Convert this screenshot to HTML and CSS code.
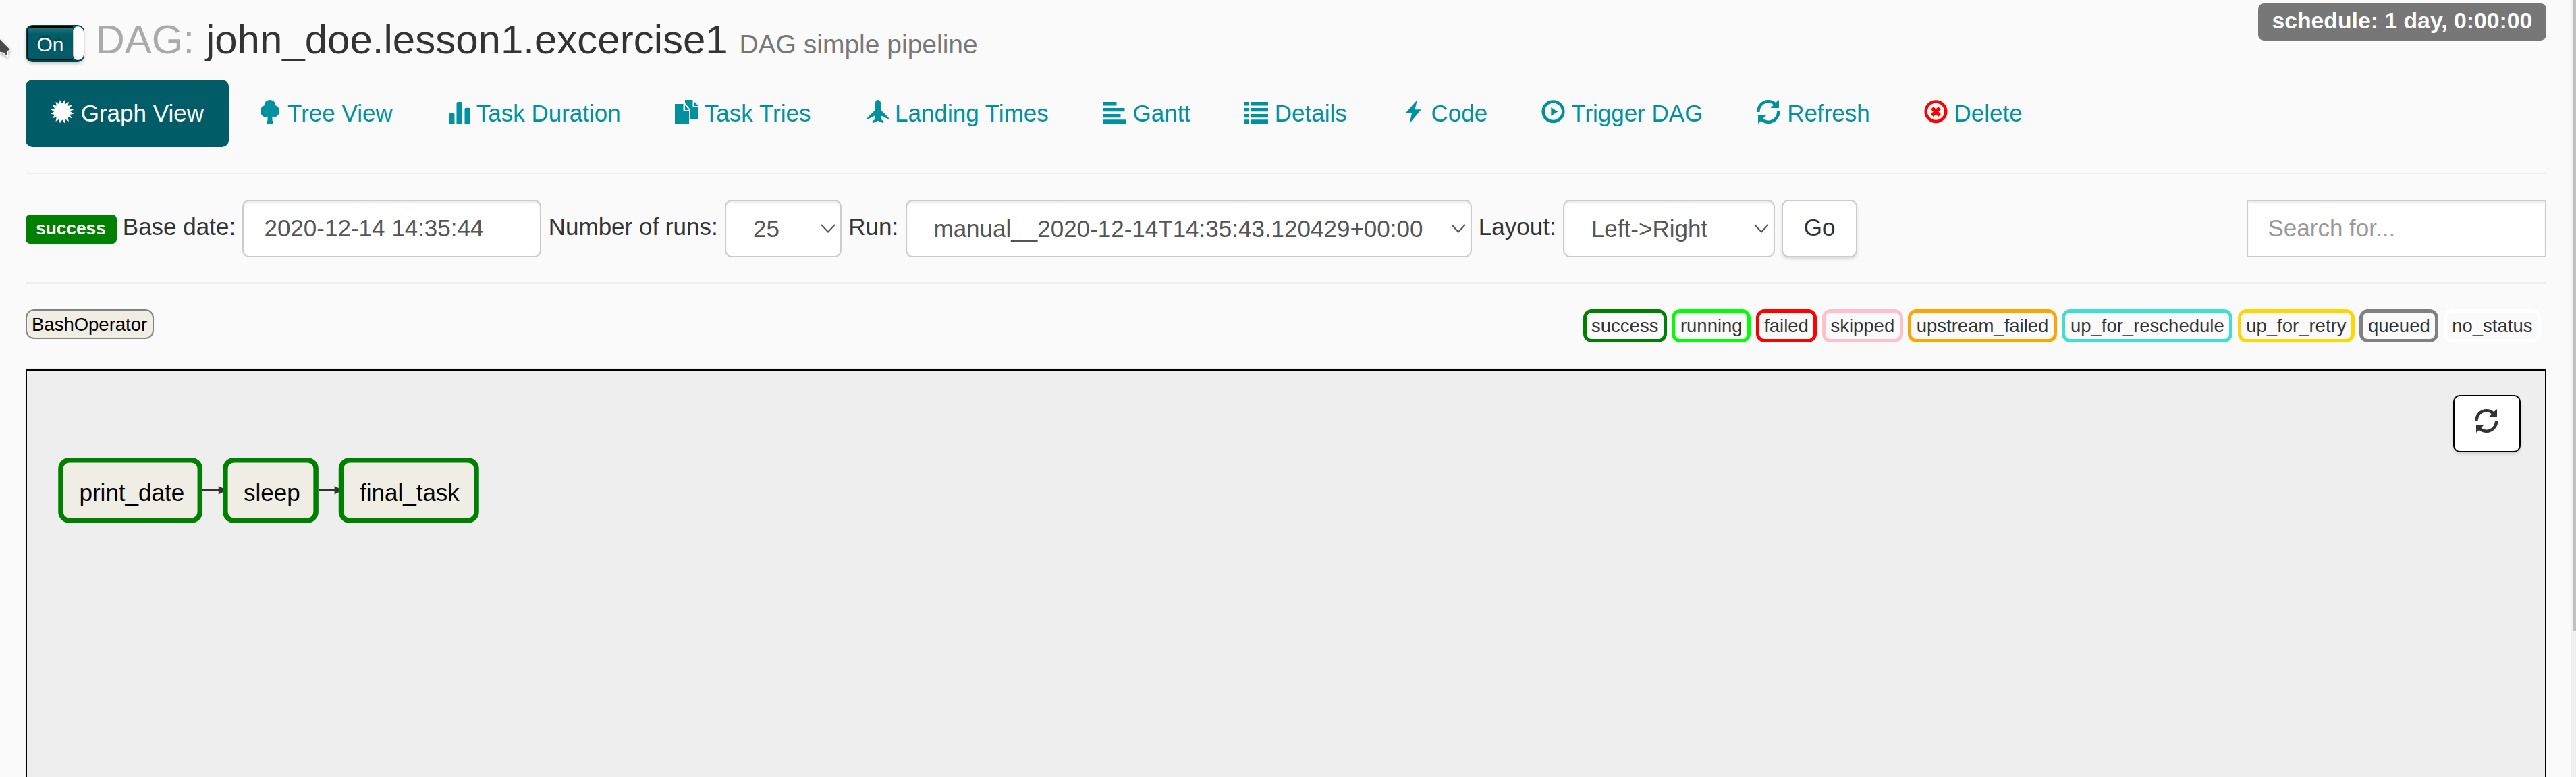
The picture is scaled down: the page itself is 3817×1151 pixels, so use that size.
FILE: index.html
```html
<!DOCTYPE html>
<html lang="en">
<head>
<meta charset="utf-8">
<title>Airflow - john_doe.lesson1.excercise1</title>
<link rel="stylesheet" href="styles.css">
</head>
<body>
<div class="page">
  <header class="head">
    <div class="toggle"><span class="toggle-on">On</span><span class="toggle-handle"></span></div>
    <h3 class="title"><span class="muted">DAG:</span> <span>john_doe.lesson1.excercise1</span> <small>DAG simple pipeline</small></h3>
    <span class="schedule">schedule: 1 day, 0:00:00</span>
  </header>

  <nav class="pills">
    <a class="pill active"><svg class="icon" viewBox="0 0 35 35"><path transform="translate(17.200 17.300)" d="M0-12 3.400-17.200 4.600-11.100 9.700-14.600 8.500-8.500 14.600-9.700 11.100-4.600 17.200-3.400 12 0 17.200 3.400 11.100 4.600 14.600 9.700 8.500 8.500 9.700 14.600 4.600 11.100 3.400 17.200 0 12-3.400 17.200-4.600 11.100-9.700 14.600-8.500 8.500-14.600 9.700-11.100 4.600-17.200 3.400-12 0-17.200-3.400-11.100-4.600-14.600-9.700-8.500-8.500-9.700-14.600-4.600-11.100-3.400-17.200Z"/></svg> Graph View</a>
    <a class="pill"><svg class="icon" viewBox="0 0 35 35"><path d="M18 0c5 0 8.500 4 8.300 8.300C30 9.500 32.200 13 32 17c-.2 5-3.500 8.300-7.500 8.300-1.300 0-2.200-.3-3-.8v6l1.500 1.500v3H13v-3l1.500-1.500v-6c-.8.500-1.800.8-3 .8C7.500 25.300 4.200 22 4 17c-.2-4 2-7.500 5.700-8.700C9.500 4 13 0 18 0Z"/></svg> Tree View</a>
    <a class="pill"><svg class="icon" viewBox="0 0 35 35"><path d="M3 35V22q0-2 2-2h4.500q2 0 2 2v13ZM14.500 35V5q0-2 2-2H21q2 0 2 2v30ZM26.500 35V13.700q0-2 2-2H33q2 0 2 2V35Z"/></svg> Task Duration</a>
    <a class="pill"><svg class="icon" viewBox="0 0 35 35"><path d="M0 6h12.500v11H21v18H0ZM15 8l6 7h-6ZM15 0h11.500v11H35v18H23V14.500L15 4.500ZM29 3l6 6h-6Z"/></svg> Task Tries</a>
    <a class="pill"><svg class="icon" viewBox="0 0 35 35"><path d="M20 0c2.500 0 4 2 4 4.500V15L35 25.500q1.500 1.500 1 3.500l-12-6v5l4.500 4-.5 2.500-5.500-2.500L20 31l-2.500 1-5.500 2.500-.5-2.500 4.500-4v-5L4 29q-.5-2 1-3.500L16 15V4.500C16 2 17.500 0 20 0Z"/></svg> Landing Times</a>
    <a class="pill"><svg class="icon" viewBox="0 0 35 35"><path d="M0 3h20.500v5.500H0ZM0 12h32.500v5.200H0ZM0 21h26.500v5.200H0ZM0 29.300h35V35H0Z"/></svg> Gantt</a>
    <a class="pill"><svg class="icon" viewBox="0 0 35 35"><path d="M0 3h6.300v5.500H0ZM9 3h26v5.500H9ZM0 12h6.300v5.200H0ZM9 12h26v5.200H9ZM0 21h6.300v5.200H0ZM9 21h26v5.200H9ZM0 29.300h6.300V35H0ZM9 29.300h26V35H9Z"/></svg> Details</a>
    <a class="pill"><svg class="icon" viewBox="0 0 35 35"><path d="M24 0 20.500 14.300H30L12.500 35 16 19.800H6.500Z"/></svg> Code</a>
    <a class="pill"><svg class="icon" viewBox="0 0 35 35"><circle class="ring" cx="17.500" cy="17.200" r="14.800"/><path d="M14.300 11l9.900 6.400-9.900 6.400Z"/></svg> Trigger DAG</a>
    <a class="pill"><svg class="icon" viewBox="0 0 35 35"><g id="sync"><path d="M0 18C0 8 7.500 0 17.300 0 21.500 0 25.300 1.500 28.200 4L33 0v12H20.500l4.500-4.500C23 5.800 20.300 4.600 17.300 4.600 10 4.600 4.600 10.500 4.600 18ZM34.600 17c0 10-7.500 18-17.300 18-4.200 0-8-1.500-10.900-4L2 35V23h12l-4.400 4.500c2 1.700 4.700 2.900 7.700 2.900 7.300 0 12.700-5.900 12.700-13.400Z"/></g></svg> Refresh</a>
    <a class="pill"><svg class="icon danger" viewBox="0 0 35 35"><circle class="ring" cx="17.500" cy="17.200" r="14.800"/><path class="cross" d="M12 12l11 11M23 12L12 23"/></svg> Delete</a>
  </nav>

  <hr>

  <div class="filters">
    <span class="state">success</span>
    <span class="lbl">Base date:</span>
    <span class="field date">2020-12-14 14:35:44</span>
    <span class="lbl">Number of runs:</span>
    <span class="field select runs">25<svg class="chev" viewBox="0 0 22 13"><path d="M1 1l10 10.500L21 1"/></svg></span>
    <span class="lbl">Run:</span>
    <span class="field select run">manual__2020-12-14T14:35:43.120429+00:00<svg class="chev" viewBox="0 0 22 13"><path d="M1 1l10 10.500L21 1"/></svg></span>
    <span class="lbl">Layout:</span>
    <span class="field select layout">Left-&gt;Right<svg class="chev" viewBox="0 0 22 13"><path d="M1 1l10 10.500L21 1"/></svg></span>
    <span class="go">Go</span>
    <span class="field search">Search for...</span>
  </div>

  <hr>

  <div class="legend">
    <span class="operator">BashOperator</span>
    <div class="states">
      <span class="item success">success</span>
      <span class="item running">running</span>
      <span class="item failed">failed</span>
      <span class="item skipped">skipped</span>
      <span class="item upstream">upstream_failed</span>
      <span class="item reschedule">up_for_reschedule</span>
      <span class="item retry">up_for_retry</span>
      <span class="item queued">queued</span>
      <span class="item none">no_status</span>
    </div>
  </div>

  <main class="canvas">
    <svg class="graph" width="760" height="300" viewBox="38 547 760 300">
      <path class="edge" d="M300 726.300h26M472 726.300h26"/>
      <path class="tip" d="M323.800 720l12 6.300-12 6.300ZM495.600 720l12 6.300-12 6.300Z"/>
      <g class="node">
        <rect x="90" y="681.800" width="206.300" height="89.300" rx="12.500"/>
        <rect x="333.900" y="681.800" width="134.200" height="89.300" rx="12.500"/>
        <rect x="505.500" y="681.800" width="200.500" height="89.300" rx="12.500"/>
        <text x="117.500" y="742">print_date</text>
        <text x="361" y="742">sleep</text>
        <text x="533" y="742">final_task</text>
      </g>
    </svg>
    <span class="reload"><svg class="icon" viewBox="0 0 35 35"><use href="#sync"/></svg></span>
  </main>
</div>
<div class="track"><div class="thumb"></div></div>
<svg class="cursor" width="24" height="40" viewBox="0 0 24 40"><path d="M-3 4 16 23.500 11.500 26V34L8 31.500 5 28.500-3 27Z"/></svg>
</body>
</html>
```
FILE: styles.css
```css
* { box-sizing: border-box; }

body {
  margin: 0;
  height: 1151px;
  overflow: hidden;
  display: flex;
  background: #fafafa;
  color: #333;
  font: 35px/50px "Liberation Sans", Arial, sans-serif;
}

.page {
  flex: 1;
  min-width: 0;
  height: 1151px;
  padding: 0 37.5px;
  display: flex;
  flex-direction: column;
}

.head {
  height: 118px;
  flex: none;
  display: flex;
  align-items: flex-start;
  white-space: nowrap;
}

.toggle {
  width: 87px;
  height: 55px;
  margin-top: 37px;
  display: flex;
  border: 2px solid #00444c;
  border-width: 2px 1px 3px 2px;
  border-radius: 10px;
  background: #005c66;
  box-shadow: 0 3px 4px rgba(0, 0, 0, .18);
  overflow: hidden;
}
.toggle-on {
  width: 68px;
  padding-left: 13px;
  border: solid #000;
  border-width: 2px 0 2px 2px;
  border-radius: 5px 0 0 5px;
  background: linear-gradient(#25747d, #005c66 10px);
  color: #fff;
  font-size: 30px;
  line-height: 49px;
  text-shadow: 0 -2px 2px rgba(0, 0, 0, .3);
}
.toggle-handle {
  flex: 1;
  border-left: 1px solid #ccc;
  border-radius: 8px;
  background: #fff;
}

.title {
  margin: 26px 0 0 17px;
  font-size: 60px;
  font-weight: 400;
  line-height: 66px;
}
.title small { font-size: 39px; line-height: 1; color: #777; }
.muted { color: #aaa; }

.schedule {
  height: 55px;
  margin: 5px 0 0 auto;
  padding: 0 20.250px;
  border-radius: 8.400px;
  background: #777;
  color: #fff;
  font-size: 33.750px;
  font-weight: 700;
  line-height: 51px;
}

.pills { display: flex; gap: 5px; flex: none; }
.pill {
  padding: 25px 37.500px;
  border-radius: 10px;
  color: #0091a1;
  white-space: nowrap;
  line-height: 50px;
  height: 100px;
}
.pill.active { background: #005c66; color: #fff; }

.icon {
  width: 35px;
  height: 35px;
  fill: currentColor;
  vertical-align: -3px;
  overflow: visible;
}
.ring { fill: none; stroke: currentColor; stroke-width: 4.500; }
.cross { stroke: currentColor; stroke-width: 5.500; }
.danger { color: #f00; }

hr {
  flex: none;
  width: 100%;
  height: 2px;
  margin: 38px 0;
  border: 0;
  background: #eee;
}

.filters {
  flex: none;
  height: 85px;
  margin-bottom: -1px;
  display: flex;
  align-items: center;
  gap: 10.300px;
  white-space: nowrap;
}
.state {
  height: 43px;
  width: 135px;
  margin-top: 2px;
  margin-right: -1px;
  border-radius: 6.500px;
  background: green;
  color: #fff;
  font-size: 26.250px;
  font-weight: 700;
  line-height: 40px;
  text-align: center;
}
.lbl { padding-bottom: 5px; }
.field {
  height: 85px;
  padding: 0 30px;
  border: 2px solid #ccc;
  border-radius: 10px;
  background: #fff;
  box-shadow: inset 0 2.500px 2.500px rgba(0, 0, 0, .075);
  color: #555;
  line-height: 79px;
}
.date { width: 443px; }
.select {
  display: flex;
  align-items: center;
  justify-content: space-between;
  padding: 0 7px 0 40px;
}
.runs { width: 173px; }
.run { width: 839px; }
.layout { width: 314px; }
.chev { width: 22px; height: 13px; fill: none; stroke: #555; stroke-width: 2; }
.go {
  width: 112px;
  height: 85px;
  border: 2px solid #ccc;
  border-radius: 10px;
  background: #fff;
  box-shadow: 0 3px 4px rgba(0, 0, 0, .12);
  line-height: 77px;
  text-align: center;
}
.search { width: 444px; margin-left: auto; border-radius: 0; color: #999; }

.legend {
  flex: none;
  height: 87px;
  display: flex;
  align-items: flex-start;
  justify-content: space-between;
  font-size: 27.500px;
}
.operator {
  height: 44px;
  padding: 0 7.500px;
  border: 2px solid #828282;
  border-radius: 12.500px;
  background: #f0ede4;
  color: #000;
  line-height: 41px;
}
.states { display: flex; gap: 7.500px; padding-right: 7.500px; }
.item {
  height: 49px;
  padding: 0 7.500px;
  border: 5px solid;
  border-radius: 12.500px;
  line-height: 39px;
}
.success { border-color: green; }
.running { border-color: lime; }
.failed { border-color: red; }
.skipped { border-color: pink; }
.upstream { border-color: orange; }
.reschedule { border-color: turquoise; }
.retry { border-color: gold; }
.queued { border-color: gray; }
.none { border-color: #fff; }

.canvas {
  flex: 1;
  min-height: 0;
  display: flex;
  align-items: flex-start;
  justify-content: space-between;
  margin-top: 2px;
  border: 2px solid #000;
  border-bottom: 0;
  background: #eee;
  box-shadow: 0 -2px 0 #eee;
}
.graph { margin: -2px 0 0 -2px; }
.edge { stroke: #333; stroke-width: 2.700; }
.tip { fill: #333; }
.node rect { fill: #f0ede4; stroke: green; stroke-width: 7.500; }
.node text { fill: #000; font-size: 35px; }
.reload {
  width: 100px;
  height: 85px;
  margin: 36px 36px 0 0;
  display: flex;
  justify-content: center;
  padding-top: 19px;
  border: 2px solid #000;
  border-radius: 10px;
  background: #fff;
  box-shadow: 0 3px 4px rgba(0, 0, 0, .12);
}

.track { width: 7px; padding-left: 2px; background: #f0f0f0; }
.thumb { height: 935px; background: #c1c1c1; }

.cursor {
  position: absolute;
  left: 0;
  top: 50px;
  fill: #4a4a4a;
  stroke: #fff;
  stroke-width: 1.500;
  filter: drop-shadow(0 2px 2px rgba(0, 0, 0, .3));
}
```
